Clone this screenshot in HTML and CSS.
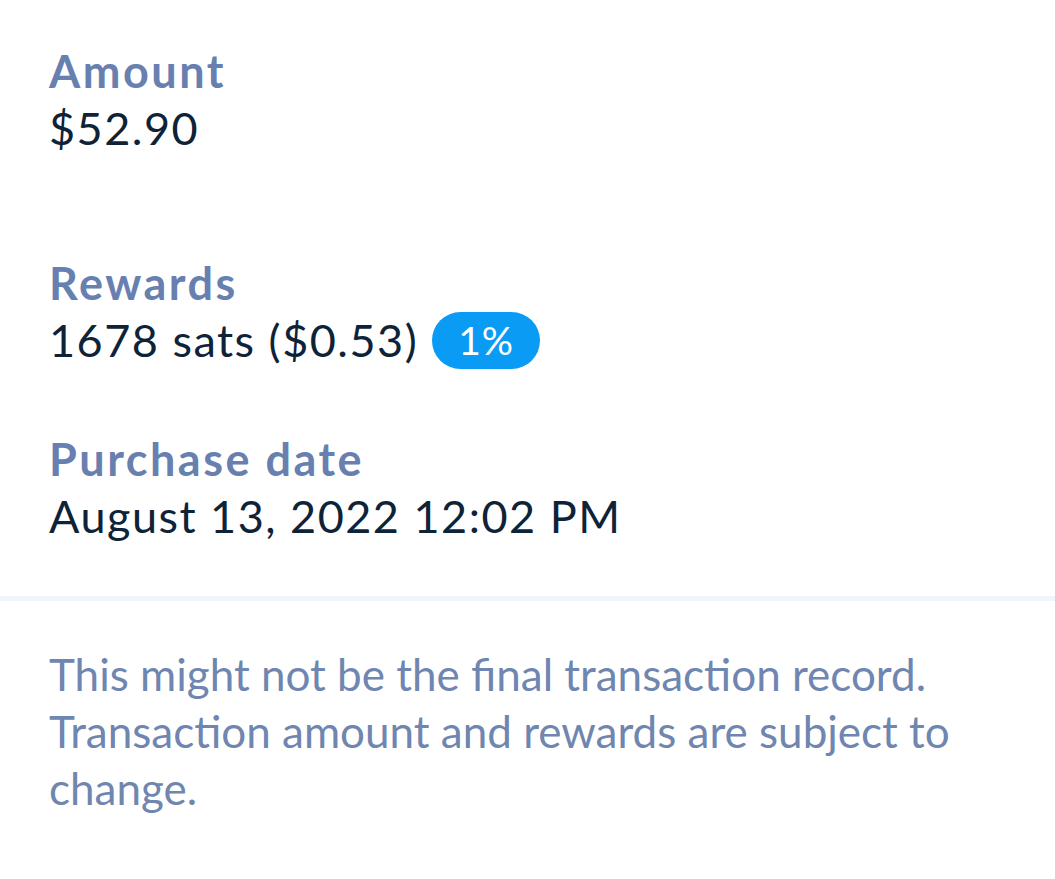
FILE: index.html
```html
<!DOCTYPE html>
<html lang="en">
<head>
<meta charset="utf-8">
<link rel="stylesheet" href="styles.css">
</head>
<body>
<main class="details">
  <section class="field field-amount">
    <div class="label">Amount</div>
    <div class="value">$52.90</div>
  </section>
  <section class="field field-rewards">
    <div class="label">Rewards</div>
    <div class="value">1678 sats ($0.53) <span class="badge">1%</span></div>
  </section>
  <section class="field field-date">
    <div class="label">Purchase date</div>
    <div class="value">August 13, 2022 12:02 PM</div>
  </section>
</main>
<div class="divider"></div>
<p class="note">This might not be the final transaction record. Transaction amount and rewards are subject to change.</p>
</body>
</html>
```

FILE: styles.css
```css
html, body {
  margin: 0;
  padding: 0;
  background: #ffffff;
}
body {
  font-family: Lato, "Open Sans", sans-serif;
  width: 1055px;
}
.details {
  padding: 43px 0 0 49px;
  display: flex;
  flex-direction: column;
}
.field {
  display: flex;
  flex-direction: column;
}
.field-rewards { margin-top: 98px; }
.field-date { margin-top: 62px; }
.label {
  color: #6880b0;
  font-weight: 700;
  font-size: 45px;
  letter-spacing: 2.5px;
  line-height: 56px;
}
.value {
  color: #0e2337;
  font-size: 45px;
  letter-spacing: 1.5px;
  line-height: 58px;
  display: flex;
  align-items: center;
  gap: 14px;
}
.badge {
  display: inline-flex;
  align-items: center;
  justify-content: center;
  width: 108px;
  height: 57px;
  border-radius: 29px;
  background: #0a9bf5;
  color: #ffffff;
  font-size: 39px;
  font-weight: 400;
  letter-spacing: 1px;
}
.divider {
  margin-top: 51px;
  height: 5px;
  background: #f0f5fd;
}
.note {
  margin: 45px 0 0 0;
  padding: 0 60px 0 49px;
  color: #6f86b0;
  font-size: 44px;
  line-height: 57px;
}
```
